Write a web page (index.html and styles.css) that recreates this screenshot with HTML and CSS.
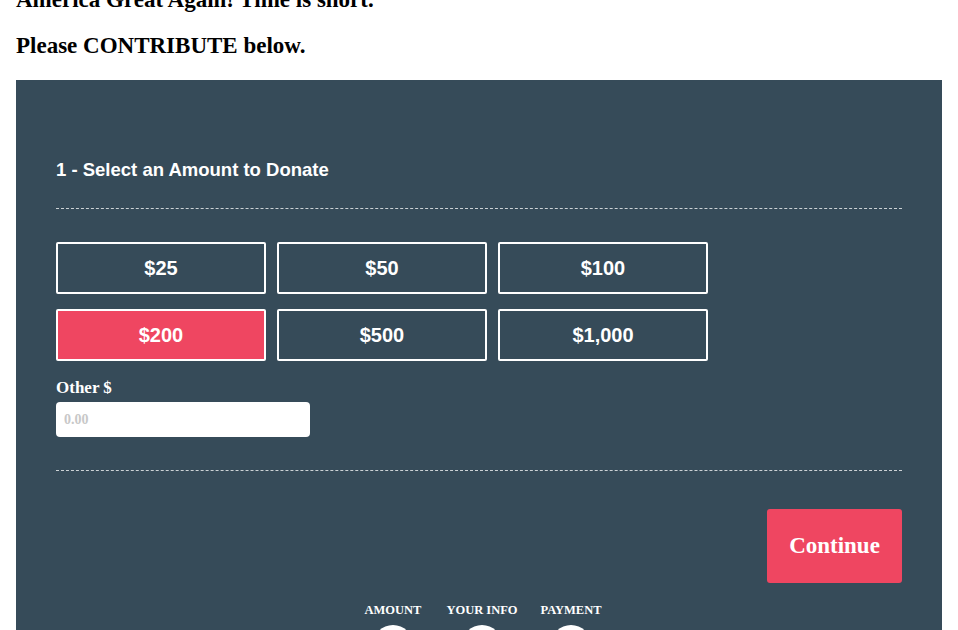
FILE: index.html
```html
<!DOCTYPE html>
<html lang="en">

<head>
    <meta charset="UTF-8">
    <meta name="viewport" content="width=device-width, initial-scale=1.0">
    <title>Contribute</title>
    <link rel="stylesheet" href="styles.css">
</head>

<body>
    <div class="page">
        <p class="intro intro-first">America Great Again! Time is short.</p>
        <p class="intro">Please CONTRIBUTE below.</p>

        <form class="donate" onsubmit="return false;">
            <h2 class="donate-title">1 - Select an Amount to Donate</h2>

            <div class="amounts">
                <button type="button" class="amount">$25</button>
                <button type="button" class="amount">$50</button>
                <button type="button" class="amount">$100</button>
                <button type="button" class="amount active">$200</button>
                <button type="button" class="amount">$500</button>
                <button type="button" class="amount">$1,000</button>
            </div>

            <label class="other-label" for="otherAmount">Other $</label>
            <input type="text" id="otherAmount" class="other-input" placeholder="0.00">

            <div class="actions">
                <button type="submit" class="continue">Continue</button>
            </div>

            <ul class="steps">
                <li class="step"><span>Amount</span><i class="dot"></i></li>
                <li class="step"><span>Your Info</span><i class="dot"></i></li>
                <li class="step"><span>Payment</span><i class="dot"></i></li>
            </ul>
        </form>
    </div>
</body>

</html>
```

FILE: styles.css
```css
/* General Styles */
body {
    margin: 0;
    font-family: 'Liberation Serif', 'Times New Roman', serif;
    background-color: #fff;
    color: #000;
    overflow: hidden;
}

.page {
    padding: 0 16px;
}

.intro {
    margin: 0 0 22px;
    font-size: 23px;
    font-weight: bold;
    line-height: 24px;
}

.intro-first {
    margin-top: -12px;
}

/* Donate Panel */
.donate {
    background-color: #364b59;
    padding: 80px 40px 10px;
    color: #fff;
}

.donate-title {
    margin: 0;
    padding-bottom: 28px;
    border-bottom: 1px dashed rgba(255, 255, 255, 0.75);
    font-family: 'Liberation Sans', Arial, sans-serif;
    font-size: 18.5px;
    line-height: 20px;
}

.amounts {
    display: grid;
    grid-template-columns: repeat(3, 210px);
    column-gap: 11px;
    row-gap: 15px;
    margin-top: 33px;
}

.amount {
    height: 52px;
    background-color: transparent;
    border: 2px solid #fff;
    border-radius: 2px;
    color: #fff;
    font-family: 'Liberation Sans', Arial, sans-serif;
    font-size: 20px;
    font-weight: bold;
    cursor: pointer;
}

.amount.active {
    background-color: #ef4661;
}

.other-label {
    display: block;
    margin-top: 18px;
    font-size: 17px;
    font-weight: bold;
    line-height: 18px;
}

.other-input {
    display: block;
    box-sizing: border-box;
    width: 254px;
    height: 35px;
    margin-top: 5px;
    padding: 0 8px;
    border: none;
    border-radius: 4px;
    font-family: 'Liberation Serif', 'Times New Roman', serif;
    font-size: 14px;
    font-weight: bold;
    outline: none;
}

.other-input::placeholder {
    color: #c8c8c8;
}

/* Continue */
.actions {
    display: flex;
    justify-content: flex-end;
    margin-top: 33px;
    padding-top: 38px;
    border-top: 1px dashed rgba(255, 255, 255, 0.75);
}

.continue {
    width: 135px;
    height: 74px;
    background-color: #ef4661;
    border: none;
    border-radius: 3px;
    color: #fff;
    font-family: 'Liberation Serif', 'Times New Roman', serif;
    font-size: 23px;
    font-weight: bold;
    cursor: pointer;
}

/* Steps */
.steps {
    display: flex;
    justify-content: center;
    list-style: none;
    margin: 21px 0 0;
    padding: 0 0 0 6px;
}

.step {
    display: flex;
    flex-direction: column;
    align-items: center;
    width: 89px;
    font-size: 12.5px;
    font-weight: bold;
    line-height: 13px;
    text-transform: uppercase;
}

.dot {
    display: block;
    width: 40px;
    height: 40px;
    margin-top: 8px;
    border-radius: 50%;
    background-color: #fff;
}
```
